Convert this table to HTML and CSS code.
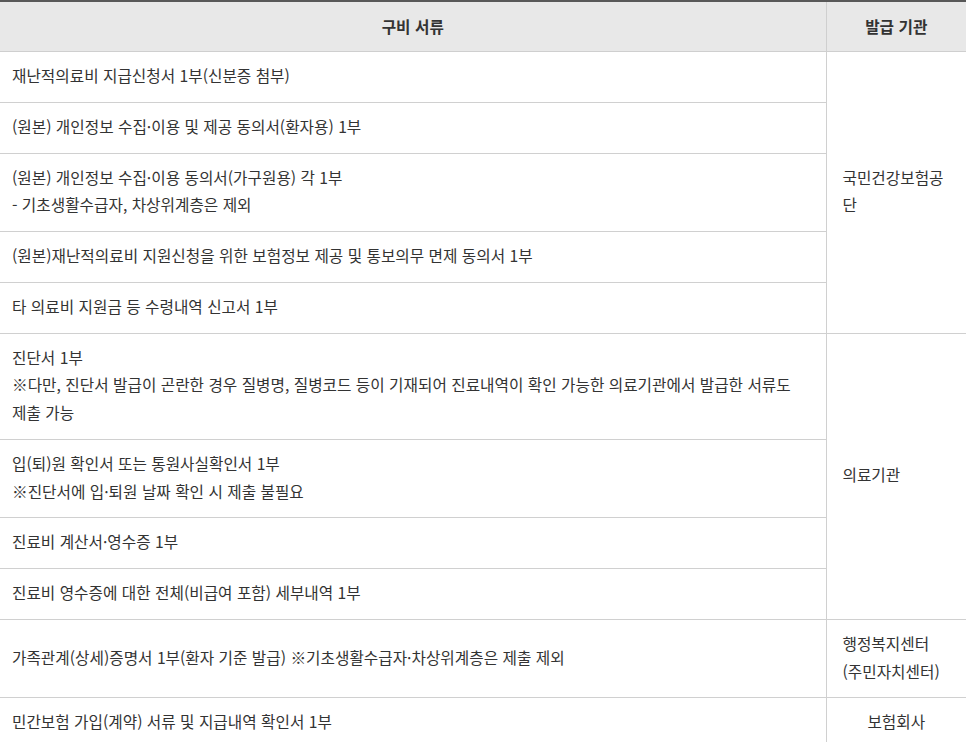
FILE: index.html
```html
<!DOCTYPE html>
<html lang="ko">
<head>
<meta charset="utf-8">
<title>구비 서류</title>
<link rel="stylesheet" href="styles.css">
</head>
<body>
<table class="docs">
  <colgroup>
    <col class="c-doc">
    <col class="c-org">
  </colgroup>
  <thead>
    <tr>
      <th>구비 서류</th>
      <th class="org-h">발급 기관</th>
    </tr>
  </thead>
  <tbody>
    <tr>
      <td>재난적의료비 지급신청서 1부(신분증 첨부)</td>
      <td class="org" rowspan="5">국민건강보험공단</td>
    </tr>
    <tr>
      <td>(원본) 개인정보 수집·이용 및 제공 동의서(환자용) 1부</td>
    </tr>
    <tr>
      <td>(원본) 개인정보 수집·이용 동의서(가구원용) 각 1부<br>- 기초생활수급자, 차상위계층은 제외</td>
    </tr>
    <tr>
      <td>(원본)재난적의료비 지원신청을 위한 보험정보 제공 및 통보의무 면제 동의서 1부</td>
    </tr>
    <tr>
      <td>타 의료비 지원금 등 수령내역 신고서 1부</td>
    </tr>
    <tr>
      <td>진단서 1부<br>※다만, 진단서 발급이 곤란한 경우 질병명, 질병코드 등이 기재되어 진료내역이 확인 가능한 의료기관에서 발급한 서류도<br>제출 가능</td>
      <td class="org" rowspan="4">의료기관</td>
    </tr>
    <tr>
      <td>입(퇴)원 확인서 또는 통원사실확인서 1부<br>※진단서에 입·퇴원 날짜 확인 시 제출 불필요</td>
    </tr>
    <tr>
      <td>진료비 계산서·영수증 1부</td>
    </tr>
    <tr>
      <td>진료비 영수증에 대한 전체(비급여 포함) 세부내역 1부</td>
    </tr>
    <tr>
      <td>가족관계(상세)증명서 1부(환자 기준 발급) ※기초생활수급자·차상위계층은 제출 제외</td>
      <td class="org keep">행정복지센터 (주민자치센터)</td>
    </tr>
    <tr>
      <td>민간보험 가입(계약) 서류 및 지급내역 확인서 1부</td>
      <td class="org center">보험회사</td>
    </tr>
  </tbody>
</table>
</body>
</html>
```

FILE: styles.css
```css
html, body {
  margin: 0;
  padding: 0;
  background: #ffffff;
}

body {
  font-family: "Noto Sans CJK KR", "Noto Sans", sans-serif;
  font-size: 15.7px;
  color: #333333;
}

.docs {
  width: 966px;
  border-collapse: collapse;
  table-layout: fixed;
  border-top: 2px solid #585858;
}

.c-doc {
  width: 826px;
}

.c-org {
  width: 140px;
}

.docs th {
  height: 49px;
  padding: 0;
  background: #e8e8e8;
  font-weight: 700;
  text-align: center;
  color: #333333;
  border-bottom: 1px solid #cfcfcf;
}

.docs th.org-h {
  border-left: 1px solid #cfcfcf;
}

.docs td {
  padding: 10px 12px 12px 12px;
  line-height: 27.75px;
  vertical-align: middle;
  text-align: left;
  border-bottom: 1px solid #d0d0d0;
}

.docs td.org {
  padding: 10px 14px 12px 16px;
  border-left: 1px solid #d0d0d0;
}

.docs td.keep {
  word-break: keep-all;
}

.docs td.center {
  text-align: center;
  padding-left: 14px;
}
```
